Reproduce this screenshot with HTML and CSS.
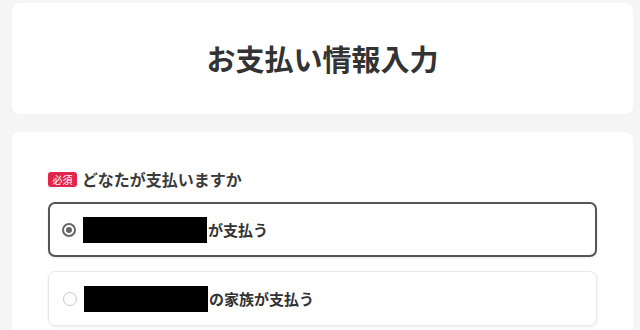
FILE: index.html
```html
<!DOCTYPE html>
<html lang="ja">
<head>
<meta charset="utf-8">
<link rel="stylesheet" href="styles.css">
</head>
<body>
<div class="page">
  <header class="card head">
    <h1 class="title">お支払い情報入力</h1>
  </header>
  <section class="card form">
    <div class="label-row">
      <span class="badge">必須</span>
      <span class="label">どなたが支払いますか</span>
    </div>
    <div class="options">
      <label class="option selected">
        <span class="radio on"><span class="dot"></span></span>
        <span class="mask"></span>
        <span class="opt-text">が支払う</span>
      </label>
      <label class="option">
        <span class="radio"></span>
        <span class="mask"></span>
        <span class="opt-text">の家族が支払う</span>
      </label>
    </div>
  </section>
</div>
</body>
</html>
```

FILE: styles.css
```css
html, body {
  margin: 0;
  padding: 0;
  background: #f5f5f5;
  font-family: "Noto Sans CJK JP", "Noto Sans", sans-serif;
  color: #333;
}
.page {
  width: 621px;
  padding: 3px 0 0 12px;
}
.card {
  background: #fff;
  border-radius: 8px;
}
.head {
  height: 111px;
  display: flex;
  align-items: center;
  justify-content: center;
  margin-bottom: 18px;
}
.title {
  margin: 0;
  font-size: 29px;
  font-weight: 700;
  line-height: 1;
  color: #333;
}
.form {
  padding: 37px 36px 20px 36px;
}
.label-row {
  display: flex;
  align-items: center;
  gap: 5px;
  height: 20px;
  margin-bottom: 13px;
}
.badge {
  background: #e3244b;
  color: #fff;
  font-size: 10px;
  line-height: 15px;
  height: 15px;
  width: 29px;
  text-align: center;
  border-radius: 3px;
}
.label {
  font-size: 16px;
  font-weight: 700;
  line-height: 20px;
  color: #3a3a3a;
}
.options {
  display: flex;
  flex-direction: column;
  gap: 14px;
}
.option {
  display: flex;
  align-items: center;
  height: 55px;
  box-sizing: border-box;
  border: 1px solid #e8e8e8;
  border-radius: 7px;
  padding-left: 14px;
  box-shadow: 0 1px 3px rgba(0,0,0,0.08);
}
.option.selected {
  border: 2px solid #555;
  padding-left: 12px;
}
.radio {
  width: 14px;
  height: 14px;
  box-sizing: border-box;
  border: 1px solid #c8c8c8;
  border-radius: 50%;
  display: flex;
  align-items: center;
  justify-content: center;
  margin-right: 7px;
}
.radio.on {
  border: 2px solid #666;
}
.dot {
  width: 6px;
  height: 6px;
  border-radius: 50%;
  background: #666;
}
.mask {
  width: 124px;
  height: 26px;
  background: #000;
}
.opt-text {
  font-size: 15px;
  font-weight: 700;
  margin-left: 1px;
}
```
